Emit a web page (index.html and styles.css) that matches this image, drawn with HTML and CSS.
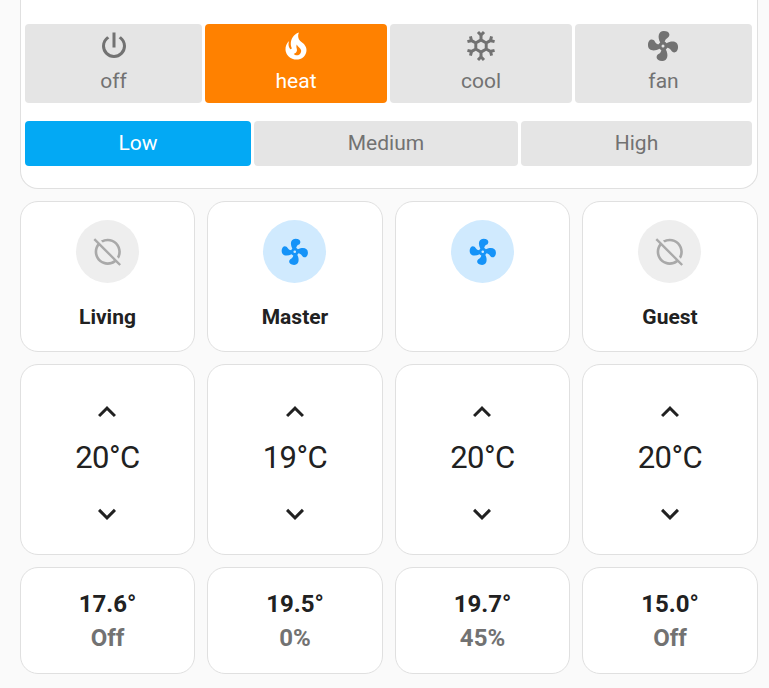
FILE: index.html
```html
<!DOCTYPE html>
<html lang="en">
<head>
<meta charset="utf-8">
<title>Climate</title>
<link rel="stylesheet" href="styles.css">
</head>
<body>
<svg class="defs" width="0" height="0" aria-hidden="true">
  <symbol id="fan" viewBox="0 0 24 24"><path d="M12,11A1,1 0 0,0 11,12A1,1 0 0,0 12,13A1,1 0 0,0 13,12A1,1 0 0,0 12,11M12.5,2C17,2 17.11,5.57 14.75,6.75C13.76,7.24 13.32,8.29 13.13,9.22C13.61,9.42 14.03,9.73 14.35,10.13C18.05,8.13 22.03,8.92 22.03,12.5C22.03,17 18.46,17.1 17.28,14.73C16.78,13.74 15.72,13.3 14.79,13.11C14.59,13.59 14.28,14 13.88,14.34C15.87,18.03 15.08,22 11.5,22C7,22 6.91,18.42 9.27,17.24C10.25,16.75 10.69,15.71 10.89,14.79C10.4,14.59 9.97,14.27 9.65,13.87C5.96,15.85 2,15.07 2,11.5C2,7 5.56,6.89 6.74,9.26C7.24,10.25 8.29,10.68 9.22,10.87C9.41,10.39 9.73,9.97 10.14,9.65C8.15,5.96 8.94,2 12.5,2Z"/></symbol>
  <symbol id="circle-off" viewBox="0 0 24 24"><path d="M22.11 21.46L2.39 1.73L1.11 3L4.06 5.95C2.78 7.63 2 9.72 2 12C2 17.5 6.5 22 12 22C14.28 22 16.37 21.23 18.05 19.94L20.84 22.73L22.11 21.46M12 20C7.58 20 4 16.42 4 12C4 10.27 4.56 8.68 5.5 7.38L16.62 18.5C15.32 19.45 13.73 20 12 20M8.17 4.97L6.72 3.5C8.25 2.56 10.06 2 12 2C17.5 2 22 6.5 22 12C22 13.94 21.44 15.75 20.5 17.28L19.03 15.83C19.65 14.69 20 13.39 20 12C20 7.58 16.42 4 12 4C10.61 4 9.31 4.35 8.17 4.97Z"/></symbol>
  <symbol id="up" viewBox="0 0 24 24"><path d="M7.41,15.41L12,10.83L16.59,15.41L18,14L12,8L6,14L7.41,15.41Z"/></symbol>
  <symbol id="down" viewBox="0 0 24 24"><path d="M7.41,8.58L12,13.17L16.59,8.58L18,10L12,16L6,10L7.41,8.58Z"/></symbol>
</svg>
<main class="dashboard">
  <section class="card controls">
    <div class="modes">
      <button class="btn mode"><svg viewBox="0 0 24 24"><path d="M16.56,5.44L15.11,6.89C16.84,7.94 18,9.83 18,12A6,6 0 0,1 12,18A6,6 0 0,1 6,12C6,9.83 7.16,7.94 8.88,6.88L7.44,5.44C5.36,6.88 4,9.28 4,12A8,8 0 0,0 12,20A8,8 0 0,0 20,12C20,9.28 18.64,6.88 16.56,5.44M13,3H11V13H13"/></svg><span>off</span></button>
      <button class="btn mode heat"><svg viewBox="0 0 24 24"><path d="M17.66 11.2C17.43 10.9 17.15 10.64 16.89 10.38C16.22 9.78 15.46 9.35 14.82 8.72C13.33 7.26 13 4.85 13.95 3C13 3.23 12.17 3.75 11.46 4.32C8.87 6.4 7.85 10.07 9.07 13.22C9.11 13.32 9.15 13.42 9.15 13.55C9.15 13.77 9 13.97 8.8 14.05C8.57 14.15 8.33 14.09 8.14 13.93C8.08 13.88 8.04 13.83 8 13.76C6.87 12.33 6.69 10.28 7.45 8.64C5.78 10 4.87 12.3 5 14.47C5.06 14.97 5.12 15.47 5.29 15.97C5.43 16.57 5.7 17.17 6 17.7C7.08 19.43 8.95 20.67 10.96 20.92C13.1 21.19 15.39 20.8 17.03 19.32C18.86 17.66 19.5 15 18.56 12.72L18.43 12.46C18.22 12 17.66 11.2 17.66 11.2M14.5 17.5C14.22 17.74 13.76 18 13.4 18.1C12.28 18.5 11.16 17.94 10.5 17.28C11.69 17 12.4 16.12 12.61 15.23C12.78 14.43 12.46 13.77 12.33 13C12.21 12.26 12.23 11.63 12.5 10.94C12.69 11.32 12.89 11.7 13.13 12C13.9 13 15.11 13.44 15.37 14.8C15.41 14.94 15.43 15.08 15.43 15.23C15.46 16.05 15.1 16.95 14.5 17.5H14.5Z"/></svg><span>heat</span></button>
      <button class="btn mode"><svg viewBox="0 0 24 24"><path d="M20.79,13.95L18.46,14.57L16.46,13.44V10.56L18.46,9.43L20.79,10.05L21.31,8.12L19.54,7.65L20,5.88L18.07,5.36L17.45,7.69L15.45,8.82L13,7.38V5.12L14.71,3.41L13.29,2L12,3.29L10.71,2L9.29,3.41L11,5.12V7.38L8.5,8.82L6.5,7.69L5.92,5.36L4,5.88L4.47,7.65L2.7,8.12L3.22,10.05L5.55,9.43L7.55,10.56V13.45L5.55,14.58L3.22,13.96L2.7,15.89L4.47,16.36L4,18.12L5.93,18.64L6.55,16.31L8.55,15.18L11,16.62V18.88L9.29,20.59L10.71,22L12,20.71L13.29,22L14.7,20.59L13,18.88V16.62L15.5,15.17L17.5,16.3L18.12,18.63L20,18.12L19.53,16.35L21.3,15.88L20.79,13.95M9.5,10.56L12,9.11L14.5,10.56V13.44L12,14.89L9.5,13.44V10.56Z"/></svg><span>cool</span></button>
      <button class="btn mode"><svg><use href="#fan"/></svg><span>fan</span></button>
    </div>
    <div class="speeds">
      <button class="btn low">Low</button>
      <button class="btn">Medium</button>
      <button class="btn">High</button>
    </div>
  </section>
  <section class="row">
    <div class="card zone"><div class="badge"><svg><use href="#circle-off"/></svg></div><span>Living</span></div>
    <div class="card zone"><div class="badge on"><svg><use href="#fan"/></svg></div><span>Master</span></div>
    <div class="card zone"><div class="badge on"><svg><use href="#fan"/></svg></div></div>
    <div class="card zone"><div class="badge"><svg><use href="#circle-off"/></svg></div><span>Guest</span></div>
  </section>
  <section class="row">
    <div class="card target"><svg><use href="#up"/></svg><span>20°C</span><svg><use href="#down"/></svg></div>
    <div class="card target"><svg><use href="#up"/></svg><span>19°C</span><svg><use href="#down"/></svg></div>
    <div class="card target"><svg><use href="#up"/></svg><span>20°C</span><svg><use href="#down"/></svg></div>
    <div class="card target"><svg><use href="#up"/></svg><span>20°C</span><svg><use href="#down"/></svg></div>
  </section>
  <section class="row">
    <div class="card reading"><span>17.6°</span><span class="state">Off</span></div>
    <div class="card reading"><span>19.5°</span><span class="state">0%</span></div>
    <div class="card reading"><span>19.7°</span><span class="state">45%</span></div>
    <div class="card reading"><span>15.0°</span><span class="state">Off</span></div>
  </section>
</main>
</body>
</html>
```
FILE: styles.css
```css
* { box-sizing: border-box; }

body {
  margin: 0;
  background: #fafafa;
  color: #212121;
  font-family: Roboto, "Liberation Sans", sans-serif;
  overflow: hidden;
}

svg { display: block; fill: currentColor; }
.defs { display: block; height: 0; }

.dashboard {
  width: 738px;
  margin-left: 20px;
  display: flex;
  flex-direction: column;
  gap: 12px;
}

.card {
  background: #fff;
  border: 1px solid #e0e0e0;
  border-radius: 18px;
}

.controls {
  height: 189px;
  padding: 24px 5px 0 4px;
  border-top: 0;
  border-radius: 0 0 18px 18px;
}

.modes, .speeds { display: grid; gap: 3px; }
.modes { grid-template-columns: 177px 182px 182px 177px; }
.speeds { grid-template-columns: 226px 264px 231px; margin-top: 18px; }

.btn {
  height: 45px;
  padding: 0 0 2px;
  border: 0;
  border-radius: 4px;
  background: #e5e5e5;
  color: #727272;
  font: 400 21px/24px Roboto, "Liberation Sans", sans-serif;
}

.mode {
  height: 79px;
  display: flex;
  flex-direction: column;
  align-items: center;
  padding-top: 4px;
}

.mode svg { width: 36px; height: 36px; }
.mode:last-child svg { margin-right: 1px; }
.mode span { margin-top: 5px; }
.heat { background: #ff8100; color: #fff; }
.low { background: #03a9f4; color: #fff; }

.row {
  display: grid;
  grid-template-columns: 175px 176px 175px 176px;
  gap: 12px;
}

.row .card {
  display: flex;
  flex-direction: column;
  align-items: center;
}

.zone {
  height: 151px;
  padding-top: 18px;
  font-size: 21px;
  font-weight: 700;
  line-height: 30px;
}

.zone span { margin-top: 19px; }

.badge {
  width: 63px;
  height: 63px;
  display: flex;
  align-items: center;
  justify-content: center;
  border-radius: 50%;
  background: #eee;
  color: #a9a9a9;
}

.zone:nth-child(even) .badge { margin-right: 1px; }

.badge svg { width: 31.5px; height: 31.5px; }
.badge.on { background: #d0eafe; color: #1593f8; }

.target {
  height: 191px;
  padding-top: 29px;
  font-size: 31px;
  letter-spacing: -0.5px;
  line-height: 42px;
}

.target svg { width: 36px; height: 36px; }
.target:nth-child(odd) svg { margin-right: 1px; }
.target span { margin: 7px 0 17px; }

.reading {
  height: 107px;
  padding-top: 19px;
  font-size: 24px;
  font-weight: 700;
  line-height: 34px;
}

.state { color: #727272; }
```
